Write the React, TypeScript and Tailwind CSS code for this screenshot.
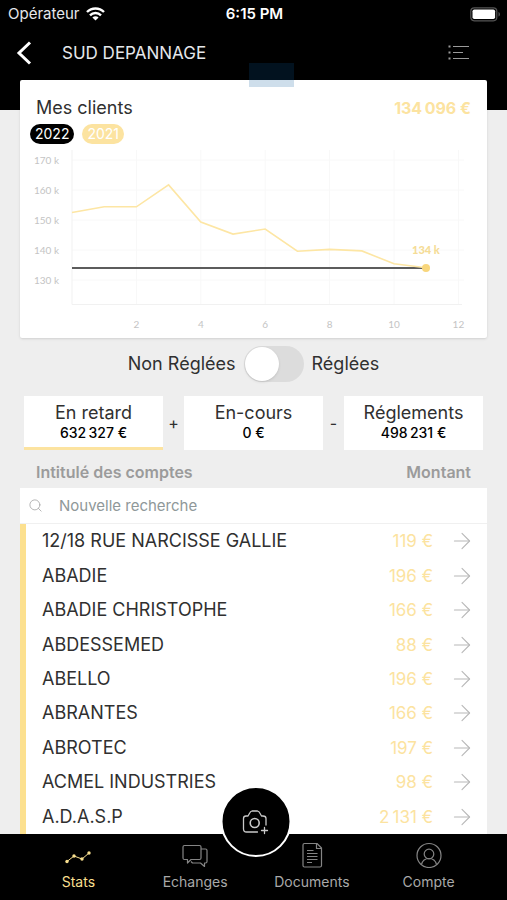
import { useState } from 'react';
import { ArrowRight, Search } from 'lucide-react';

interface Account {
  name: string;
  amount: string;
}

const accounts: Account[] = [
  { name: '12/18 RUE NARCISSE GALLIE', amount: '119' },
  { name: 'ABADIE', amount: '196' },
  { name: 'ABADIE CHRISTOPHE', amount: '166' },
  { name: 'ABDESSEMED', amount: '88' },
  { name: 'ABELLO', amount: '196' },
  { name: 'ABRANTES', amount: '166' },
  { name: 'ABROTEC', amount: '197' },
  { name: 'ACMEL INDUSTRIES', amount: '98' },
  { name: 'A.D.A.S.P', amount: '2\u202f131' },
];

const totals = [
  { label: 'En retard', amount: '632\u202f327 €', operator: '+' },
  { label: 'En-cours', amount: '0 €', operator: '-' },
  { label: 'Réglements', amount: '498\u202f231 €', operator: '' },
];

// Monthly values in thousands
const values2021 = [152.5, 154.4, 154.4, 161.7, 149.3, 145.3, 147, 139.6, 140.2, 139.7, 135.4, 134.1];

const chartX = (month: number) => 52 + month * 32.2;
const chartY = (value: number) => 130 - (value - 130) * 3;

function StatusBar() {
  return (
    <div className="grid h-7 grid-cols-3 items-center pr-1.5 pl-2 text-[15px] leading-5 text-white">
      <div className="flex items-center gap-1.5">
        <span className="text-gray-200">Opérateur</span>
        <svg width="19" height="14" viewBox="0 0 19 14" fill="none" stroke="currentColor" strokeWidth="2.4">
          <path d="M1 5C5.7 0.3 13.3 0.3 18 5" />
          <path d="M4 8.3C7 5.3 12 5.3 15 8.3" />
          <path d="M9.5 13.6L6.4 10.4C8.2 8.8 10.8 8.8 12.6 10.4Z" fill="currentColor" stroke="none" />
        </svg>
      </div>
      <span className="text-center font-semibold">6:15 PM</span>
      <svg className="justify-self-end" width="31" height="15" viewBox="0 0 31 15">
        <rect x="0.8" y="0.8" width="26" height="13" rx="3.5" fill="none" stroke="#555" strokeWidth="1.2" />
        <rect x="2.5" y="2.5" width="22.6" height="9.6" rx="1.8" fill="#fff" />
        <path d="M28.5 5C30.4 5.6 30.4 9 28.5 9.6Z" fill="#555" />
      </svg>
    </div>
  );
}

function ClientsChart() {
  const points = values2021.map((value, i) => `${chartX(i)},${chartY(value)}`).join(' ');

  return (
    <svg className="block w-full" viewBox="0 0 467 188" fontFamily="Lato, sans-serif" fontSize="10" role="img" aria-label="Mes clients">
      <g stroke="#f8f8f8">
        {[130, 140, 150, 160, 170].map((value) => (
          <line key={value} x1="52" x2="444" y1={chartY(value)} y2={chartY(value)} />
        ))}
        {[2, 4, 6, 8, 10, 12].map((month) => (
          <line key={month} x1={chartX(month)} x2={chartX(month)} y1="0" y2="155" />
        ))}
        <path d="M52 0V154.5H442" fill="none" stroke="#f1f1f1" />
      </g>
      <g fill="#c4c4c4">
        {[130, 140, 150, 160, 170].map((value) => (
          <text key={value} x="39" y={chartY(value) + 4} textAnchor="end">
            {value} k
          </text>
        ))}
        {[2, 4, 6, 8, 10, 12].map((month) => (
          <text key={month} x={chartX(month)} y="178" textAnchor="middle">
            {month}
          </text>
        ))}
      </g>
      <line x1="52" x2="406" y1="118" y2="118" stroke="#5c5c5c" strokeWidth="2" />
      <polyline points={points} fill="none" stroke="#fde6a4" strokeWidth="1.6" />
      <circle cx="406" cy="118" r="4" fill="#f8d67c" />
      <text x="406" y="104" textAnchor="middle" fontSize="11" fontWeight="900" fill="#f5dc96">
        134 k
      </text>
    </svg>
  );
}

function TabBar() {
  return (
    <nav className="sticky bottom-0 grid h-[66px] grid-cols-4 bg-black px-5 text-[14px] leading-5 text-[#a9a9a9]">
      <a href="#stats" className="flex flex-col items-center gap-1 pt-2 text-[#f8df8f]">
        <svg width="28" height="26" viewBox="0 0 28 26" fill="none" stroke="currentColor">
          <path d="M3 19.5L10 14L18 17L25 11" />
          <g fill="currentColor" stroke="none">
            <circle cx="3" cy="19.5" r="1.7" />
            <circle cx="10" cy="14" r="1.7" />
            <circle cx="18" cy="17" r="1.7" />
            <circle cx="25" cy="11" r="1.7" />
          </g>
        </svg>
        Stats
      </a>
      <a href="#echanges" className="flex flex-col items-center gap-1 pt-2">
        <svg width="26" height="26" viewBox="0 0 26 26" fill="none" stroke="#858585" strokeWidth="1.2" strokeLinejoin="round">
          <path d="M2.5 3.5H17.5Q19 3.5 19 5V16Q19 17.5 17.5 17.5H9L5.5 21V17.5H2.5Q1 17.5 1 16V5Q1 3.5 2.5 3.5Z" />
          <path d="M19 7H23.5Q25 7 25 8.5V19.5Q25 21 23.5 21H22.5V24.5L18.5 21H10.5L9 19.5" />
        </svg>
        Echanges
      </a>
      <a href="#documents" className="flex flex-col items-center gap-1 pt-2">
        <svg width="26" height="26" viewBox="0 0 26 26" fill="none" stroke="#858585" strokeWidth="1.2" strokeLinejoin="round">
          <path d="M5.5 1.5H18L22.5 6V23.5Q22.5 25 21 25H5.5Q4 25 4 23.5V3Q4 1.5 5.5 1.5Z" />
          <path d="M17.5 1.5V6.5H22.5M8 8.5H14.5M8 11.5H18.5M8 14.5H18.5M8 17.5H18.5M8 20.5H13" />
        </svg>
        Documents
      </a>
      <a href="#compte" className="flex flex-col items-center gap-1 pt-2">
        <svg width="26" height="26" viewBox="0 0 26 26" fill="none" stroke="#858585" strokeWidth="1.2">
          <circle cx="13" cy="13.5" r="12" />
          <circle cx="13" cy="12" r="4.8" />
          <path d="M5.5 22.5C6.5 18.5 9 16.5 13 16.5S19.5 18.5 20.5 22.5" />
        </svg>
        Compte
      </a>
      <button
        aria-label="Ajouter une photo"
        className="absolute -top-12 left-1/2 ml-0.5 flex size-[71px] -translate-x-1/2 items-center justify-center rounded-full border-2 border-white bg-black"
      >
        <svg width="28" height="28" viewBox="0 0 28 28" fill="none" stroke="#c9c9c9" strokeWidth="1.3" strokeLinecap="round" strokeLinejoin="round">
          <path d="M16 24H5Q2 24 2 21V10.5Q2 8 4.5 8H6.5L8.5 4.5Q9 3.500 10.500 3H16Q17.500 3.500 18 4.500L20 8H21.500Q24.500 8 24.500 10.500V17" />
          <circle cx="13.2" cy="15" r="4.5" strokeWidth="1.6" />
          <path d="M23 19.500V25.500M20 22.500H26" />
        </svg>
      </button>
    </nav>
  );
}

export default function App() {
  const [settled, setSettled] = useState(false);
  const [query, setQuery] = useState('');
  const [active, setActive] = useState(0);

  const visible = accounts.filter((account) => account.name.includes(query.toUpperCase()));

  return (
    <div className="relative flex min-h-screen flex-col bg-[#eeeeee] font-['Inter',sans-serif] text-[#303030]">
      <header className="bg-black pb-8">
        <StatusBar />
        <div className="flex h-[50px] items-center pr-9 pl-4 text-white">
          <button aria-label="Retour" className="w-[46px]">
            <svg width="16" height="24" viewBox="0 0 16 24" fill="none" stroke="currentColor" strokeWidth="3">
              <path d="M14 1.5L3 12L14 22.5" />
            </svg>
          </button>
          <h1 className="flex-1 text-[17px] leading-6 text-gray-200">SUD DEPANNAGE</h1>
          <button aria-label="Menu">
            <svg width="24" height="16" viewBox="0 0 24 16" fill="none" stroke="#9a9a9a">
              <path d="M6 1.5H22M6 7.5H16M6 13.5H22" />
              <path d="M1.5 1.5H3.5M1.5 7.5H3.5M1.5 13.5H3.5" strokeWidth="2" />
            </svg>
          </button>
        </div>
      </header>

      <main className="flex flex-1 flex-col">
        <section className="mx-5 -mt-[30px] rounded-xs bg-white shadow-sm">
          <div className="flex items-center justify-between px-4 pt-4">
            <h2 className="text-[18px] leading-6">Mes clients</h2>
            <strong className="text-[16px] leading-6 font-bold text-[#fce3a0]">134{'\u202f'}096 €</strong>
          </div>
          <div className="flex gap-2 px-2.5 pt-1 text-[14px] leading-5">
            <button className="rounded-full bg-black px-[5px] text-white">2022</button>
            <button className="rounded-full bg-[#fce3a0] px-[5px] text-white">2021</button>
          </div>
          <div className="pt-1.5">
            <ClientsChart />
          </div>
        </section>

        <label className="mt-2 flex items-center justify-center gap-2 text-[18px] leading-6">
          <span>Non Réglées</span>
          <input
            type="checkbox"
            role="switch"
            checked={settled}
            onChange={(e) => setSettled(e.target.checked)}
            className="flex h-9 w-[60px] appearance-none items-center rounded-full bg-[#dcdcdc] p-px before:size-[34px] before:rounded-full before:bg-white before:shadow checked:justify-end"
          />
          <span>Réglées</span>
        </label>

        <div className="mt-3.5 flex px-6">
          {totals.map((total, i) => (
            <div key={total.label} className={i < 2 ? 'flex flex-[160] items-center' : 'flex flex-[139] items-center'}>
              <button
                onClick={() => setActive(i)}
                className={`flex h-[54px] flex-1 flex-col items-center justify-center border-b-3 bg-white pt-0.5 ${
                  active === i ? 'border-[#fce3a0]' : 'border-white'
                }`}
              >
                <span className="text-[18px] leading-5">{total.label}</span>
                <span className="text-[14px] leading-5 font-medium text-black">{total.amount}</span>
              </button>
              {total.operator && <span className="w-[21px] text-center text-[16px]">{total.operator}</span>}
            </div>
          ))}
        </div>

        <div className="mx-5 grid flex-1">
          <table className="w-full border-separate border-spacing-0">
            <thead>
              <tr className="h-[38px] text-[16px] leading-5 text-[#9b9b9b]">
                <th className="pt-1.5 pl-4 text-left font-semibold">Intitulé des comptes</th>
                <th colSpan={2} className="pt-1.5 pr-4 text-right font-semibold">
                  Montant
                </th>
              </tr>
              <tr>
                <td colSpan={3} className="h-9 border-b border-[#f0f0f0] bg-white p-0">
                  <label className="flex items-center gap-4 pl-2">
                    <Search size={15} strokeWidth={1.3} className="text-[#a5a5a5]" />
                    <input
                      type="text"
                      aria-label="Nouvelle recherche"
                      placeholder="Nouvelle recherche"
                      value={query}
                      onChange={(e) => setQuery(e.target.value)}
                      className="flex-1 text-[15px] leading-5 outline-none placeholder:text-[#8f9899]"
                    />
                  </label>
                </td>
              </tr>
            </thead>
            <tbody className="bg-white">
              {visible.map((account) => (
                <tr key={account.name} className="h-[34px]">
                  <td className="border-l-6 border-[#fce08f] pl-4 text-[18px] leading-6">{account.name}</td>
                  <td className="text-right text-[17px] leading-6 text-[#fce3a0]">{account.amount} €</td>
                  <td className="w-[54px] pr-3">
                    <button aria-label={`Ouvrir ${account.name}`} className="flex w-full justify-end">
                      <ArrowRight size={26} strokeWidth={1} className="text-[#b8b8b8]" />
                    </button>
                  </td>
                </tr>
              ))}
            </tbody>
          </table>
        </div>
      </main>

      <TabBar />
      <div className="absolute top-[63px] left-[249px] h-6 w-[45px] bg-[#0a5a9a]/20" />
    </div>
  );
}
